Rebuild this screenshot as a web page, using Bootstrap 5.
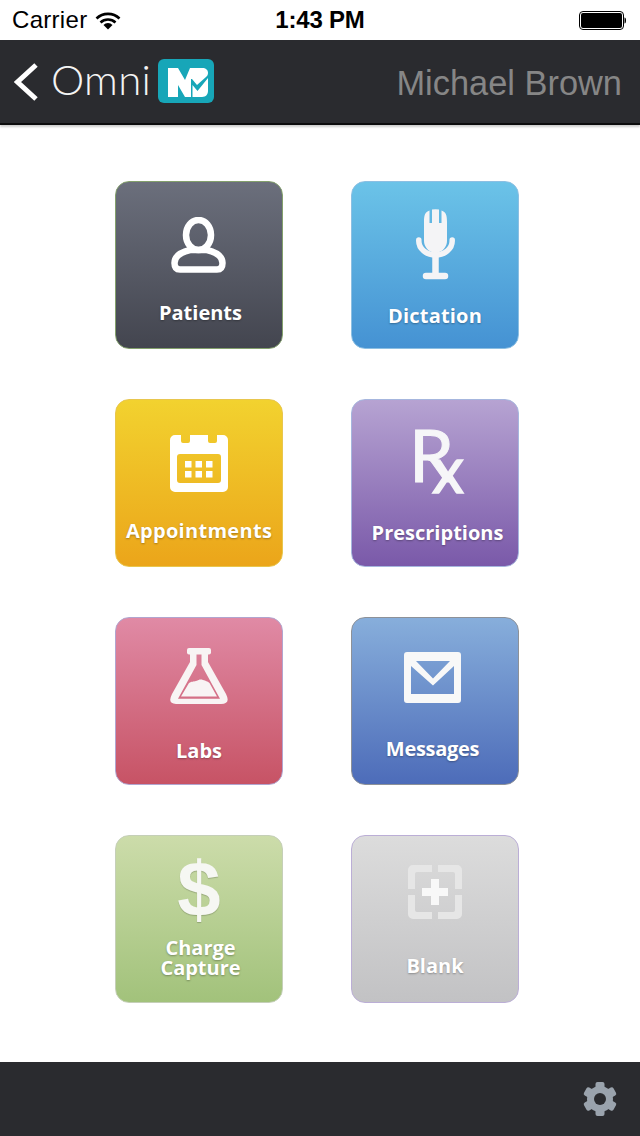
<!DOCTYPE html>
<html lang="en">
<head>
  <meta charset="UTF-8">
  <title>OmniMD</title>
  <meta name="viewport" content="width=device-width, initial-scale=1">
  <link href="https://cdn.jsdelivr.net/npm/bootstrap@5.3.2/dist/css/bootstrap.min.css" rel="stylesheet">
  <style>
    html, body { height: 100%; }
    body {
      width: 640px;
      height: 1136px;
      overflow: hidden;
      background: #fff;
      font-family: "Liberation Sans", Arial, sans-serif;
    }
    .status-bar { height: 40px; padding: 0 14px 0 12px; font-size: 24px; letter-spacing: .3px; color: #000; }
    .status-clock { font-weight: 700; font-size: 24px; letter-spacing: -.2px; margin-left: 2px; }
    .status-side { width: 200px; }
    .top-bar {
      height: 85px;
      padding: 0 18px 0 14px;
      background: #2a2b2f;
      border-bottom: 2px solid #0c0c0d;
      box-shadow: 0 2px 2px rgba(0,0,0,.2);
    }
    .brand-word { font-family: Lato, sans-serif; font-weight: 300; font-size: 42px; letter-spacing: .3px; color: #f4f4f4; line-height: 1; margin: 0 7px 5px 11px; }
    .brand-logo { margin-bottom: 2px; }
    .user-name { font-size: 34.400px; color: #868686; margin-top: 4px; }
    .tile-grid {
      display: grid;
      grid-template-columns: 168px 168px;
      grid-auto-rows: 168px;
      column-gap: 68px;
      row-gap: 50px;
      padding: 56px 0 0 115px;
      height: 937px;
    }
    .tile {
      display: flex;
      flex-direction: column;
      align-items: center;
      border-radius: 14px;
      border: 1px solid;
      color: #fff;
      text-decoration: none;
      font-family: "Open Sans", sans-serif;
      font-weight: 700;
      font-size: 20px;
      line-height: 20px;
      text-align: center;
      text-shadow: 0 1px 2px rgba(0,0,0,.3);
    }
    .tile svg { display: block; }
    .tile-patients { background: linear-gradient(#6b6f7c, #43454f); border-color: #83a06c; padding-top: 35px; }
    .tile-dictation { background: linear-gradient(#6bc3e8, #4592d3); border-color: #8cbfe2; padding-top: 27px; }
    .tile-appointments { background: linear-gradient(#f2d22f, #eba51a); border-color: #e8c64e; padding-top: 35px; }
    .tile-prescriptions { background: linear-gradient(#b6a3d2, #7a59a9); border-color: #a6b6de; padding-top: 30px; }
    .tile-labs { background: linear-gradient(#e08aa5, #c75365); border-color: #b1a5cf; padding-top: 30px; }
    .tile-messages { background: linear-gradient(#87aedb, #4d6cb9); border-color: #8d9198; padding: 34px 5px 0 0; }
    .tile-charge { background: linear-gradient(#ccdcaa, #a2c27b); border-color: #c5cfb8; padding-top: 19px; }
    .tile-blank { background: linear-gradient(#dcdcdc, #c2c2c4); border-color: #bbaed6; padding-top: 29px; }
    .tile-patients .tile-label { margin: 30px 0 0 3px; }
    .tile-dictation .tile-label { margin-top: 26px; letter-spacing: .2px; }
    .tile-appointments .tile-label { margin-top: 29px; letter-spacing: .3px; }
    .tile-prescriptions .tile-label { margin: 29px 0 0 5px; }
    .tile-labs .tile-label { margin-top: 36px; }
    .tile-messages .tile-label { margin-top: 36px; letter-spacing: -.3px; }
    .tile-charge .tile-label { margin: 11px 0 0 3px; }
    .tile-blank .tile-label { margin-top: 37px; }
    /* Rx and dollar marks are plain type */
    .rx-mark {
      display: block;
      width: 58px;
      height: 64px;
      font-family: Lato, sans-serif;
      font-weight: 400;
      font-size: 72px;
      line-height: 48px;
      text-align: left;
      color: #f6f6f8;
      -webkit-text-stroke: 1px #f6f6f8;
      text-shadow: none;
      padding-left: 3px;
    }
    .rx-mark-x { font-size: 64px; line-height: 0; vertical-align: -11px; margin-left: -22px; -webkit-text-stroke: 1.500px #f6f6f8; }
    .dollar-mark {
      display: block;
      height: 72px;
      font-family: "Liberation Sans", sans-serif;
      font-size: 78px;
      line-height: 69px;
      color: #f6f7f3;
      text-shadow: 0 1px 1px rgba(0,0,0,.2);
    }
    .bottom-bar { height: 74px; background: #2a2b2f; padding-right: 23px; }
  </style>
</head>
<body>
  <!-- status bar -->
  <div class="status-bar d-flex align-items-center justify-content-between">
    <div class="status-side d-flex align-items-center">
      <span>Carrier</span>
      <svg class="ms-2" width="26" height="19" viewBox="0 0 26 19">
        <path d="M1.5 7.5a16.5 16.5 0 0 1 23 0" fill="none" stroke="#000" stroke-width="2.6"/>
        <path d="M5.5 11.5a11 11 0 0 1 15 0" fill="none" stroke="#000" stroke-width="2.6"/>
        <path d="M8.5 14a6 6 0 0 1 9 0L13 18.5z" fill="#000"/>
      </svg>
    </div>
    <span class="status-clock">1:43 PM</span>
    <div class="status-side d-flex justify-content-end">
      <svg width="47" height="19" viewBox="0 0 47 19">
        <rect x=".5" y=".5" width="44" height="18" rx="3.5" fill="#fff" stroke="#000"/>
        <rect x="2" y="2" width="41" height="15" rx="2" fill="#000"/>
        <path d="M45.500 6.500c1 0 1.500 1 1.500 3s-.5 3-1.500 3z" fill="#000"/>
      </svg>
    </div>
  </div>

  <!-- top bar -->
  <nav class="top-bar d-flex align-items-center justify-content-between">
    <div class="d-flex align-items-center">
      <svg width="26" height="38" viewBox="0 0 26 38">
        <path d="M22 2 3.500 19 22 36" fill="none" stroke="#fff" stroke-width="5"/>
      </svg>
      <span class="brand-word">Omni</span>
      <svg class="brand-logo" width="56" height="44" viewBox="0 0 56 44">
        <rect width="56" height="44" rx="6" fill="#17a6b8"/>
        <path fill="#fff" d="M10 9H20L27 21 32 9H44c4 0 6 2 6 5 0 2-1 3-2 4l-9 8-5-6H33V38H27L20 26V38H10z"/>
        <path fill="#fff" d="M34.500 26l5 6 10.500-13V32c0 3-2 6-6 6H34.500z"/>
      </svg>
    </div>
    <span class="user-name">Michael Brown</span>
  </nav>

  <!-- home tiles -->
  <main class="tile-grid">
    <a class="tile tile-patients" href="#">
      <svg width="58" height="56" viewBox="0 0 58 56" fill="none" stroke="#fff" stroke-width="6.500">
        <ellipse cx="28.500" cy="18" rx="12.500" ry="15"/>
        <path d="M4.500 46C4.500 39 12 35 20 33H37C45 35 52.500 39 52.500 46 52.500 50 51 52.500 47 52.500H10C6 52.500 4.500 50 4.500 46z"/>
      </svg>
      <span class="tile-label">Patients</span>
    </a>
    <a class="tile tile-dictation" href="#">
      <svg width="41" height="71" viewBox="0 0 41 71">
        <path fill="#f4f4f6" d="M9 13C9 6 10 3 14.500 1.500V14H17V.5Q20.500 0 24 .5V14h2.500V1.500C31 3 32 6 32 13V32A11.500 11.500 0 0 1 9 32z"/>
        <path d="M3.800 31v1A16.700 14 0 0 0 37.200 32v-1" fill="none" stroke="#f4f4f6" stroke-width="5.500" stroke-linecap="round"/>
        <path d="M20.500 46V66M11 67H30" fill="none" stroke="#f4f4f6" stroke-width="6.500" stroke-linecap="round"/>
      </svg>
      <span class="tile-label">Dictation</span>
    </a>
    <a class="tile tile-appointments" href="#">
      <svg width="58" height="57" viewBox="0 0 58 57">
        <path fill-rule="evenodd" fill="#fff" d="M5 0h6v6a2 2 0 0 0 2 2h5a2 2 0 0 0 2-2V0h18v6a2 2 0 0 0 2 2h5a2 2 0 0 0 2-2V0h6a5 5 0 0 1 5 5v47a5 5 0 0 1-5 5H5a5 5 0 0 1-5-5V5a5 5 0 0 1 5-5zM10 19a3 3 0 0 0-3 3v23a3 3 0 0 0 3 3h38a3 3 0 0 0 3-3V22a3 3 0 0 0-3-3z"/>
        <path fill="#fff" d="M15 26h6.500v6.500H15zM25.500 26H32v6.500h-6.500zM36 26h6.500v6.500H36zM15 36h6.500v6.500H15zM25.500 36H32v6.500h-6.500zM36 36h6.500v6.500H36z"/>
      </svg>
      <span class="tile-label">Appointments</span>
    </a>
    <a class="tile tile-prescriptions" href="#">
      <span class="rx-mark">R<span class="rx-mark-x">x</span></span>
      <span class="tile-label">Prescriptions</span>
    </a>
    <a class="tile tile-labs" href="#">
      <svg width="58" height="57" viewBox="0 0 58 57">
        <rect x="17" y="0" width="24" height="6.500" rx="2" fill="#f8f4f4"/>
        <path fill="#f8f4f4" fill-rule="evenodd" d="M20 5H38V14L56 46Q61 56 51 56H6Q-3 56 2 46L20 14zM26.500 6V17L8 50.700H50L31.500 17V6z"/>
        <path fill="#f8f4f4" d="M19 35c3-2 4-1 7-2s4-2 7-1 4 1 6.500 3L47 48.500H11z"/>
      </svg>
      <span class="tile-label">Labs</span>
    </a>
    <a class="tile tile-messages" href="#">
      <svg width="58" height="51" viewBox="0 0 58 51">
        <path fill="#f8f8f8" fill-rule="evenodd" d="M3 0h51a3 3 0 0 1 3 3v45a3 3 0 0 1-3 3H3a3 3 0 0 1-3-3V3a3 3 0 0 1 3-3zM12 9H46L29 26.500zM7 14 29 33.500 50 14V42H7z"/>
      </svg>
      <span class="tile-label">Messages</span>
    </a>
    <a class="tile tile-charge" href="#">
      <span class="dollar-mark">$</span>
      <span class="tile-label">Charge<br>Capture</span>
    </a>
    <a class="tile tile-blank" href="#">
      <svg width="54" height="54" viewBox="0 0 54 54">
        <path fill="#e6e6e6" d="M5 0h19v7H9a2 2 0 0 0-2 2v15H0V5a5 5 0 0 1 5-5zM30 0h19a5 5 0 0 1 5 5v19h-7V9a2 2 0 0 0-2-2H30zM0 30h7v15a2 2 0 0 0 2 2h15v7H5a5 5 0 0 1-5-5zM47 30h7v19a5 5 0 0 1-5 5H30v-7h15a2 2 0 0 0 2-2z"/>
        <path fill="#f8f8f8" d="M23 14h8v9h9v8h-9v9h-8v-9h-9v-8h9z"/>
      </svg>
      <span class="tile-label">Blank</span>
    </a>
  </main>

  <!-- bottom bar -->
  <footer class="bottom-bar d-flex align-items-center justify-content-end">
    <svg width="34" height="34" viewBox="0 0 34 34">
      <g fill="#9aa3ad">
        <circle cx="17" cy="17" r="13"/>
        <rect x="12.500" y="0" width="9" height="8" rx="2"/>
        <rect x="12.500" y="0" width="9" height="8" rx="2" transform="rotate(60 17 17)"/>
        <rect x="12.500" y="0" width="9" height="8" rx="2" transform="rotate(120 17 17)"/>
        <rect x="12.500" y="0" width="9" height="8" rx="2" transform="rotate(180 17 17)"/>
        <rect x="12.500" y="0" width="9" height="8" rx="2" transform="rotate(240 17 17)"/>
        <rect x="12.500" y="0" width="9" height="8" rx="2" transform="rotate(300 17 17)"/>
      </g>
      <circle cx="17" cy="17" r="6" fill="#2a2b2f"/>
    </svg>
  </footer>
  <script src="https://cdn.jsdelivr.net/npm/bootstrap@5.3.2/dist/js/bootstrap.bundle.min.js"></script>
</body>
</html>
